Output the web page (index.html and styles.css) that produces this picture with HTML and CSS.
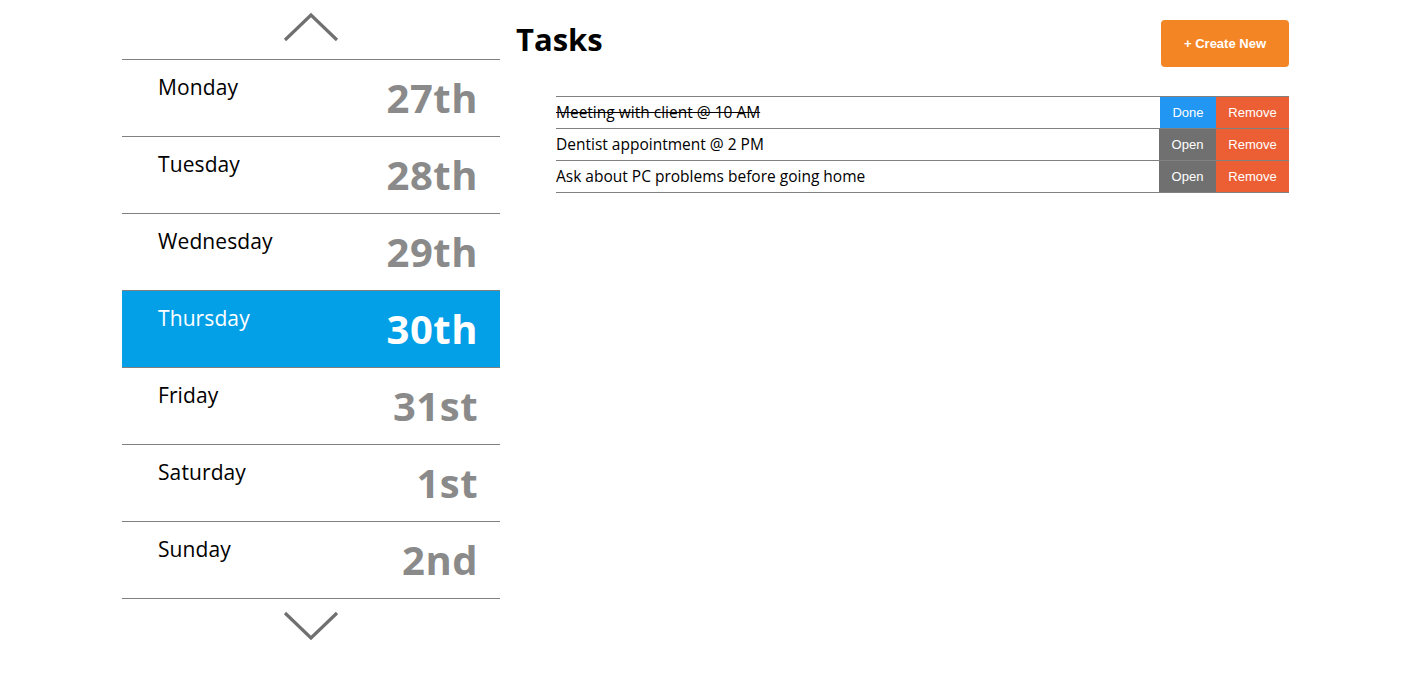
FILE: index.html
```html
<!DOCTYPE html>
<html>
<head>
<meta charset="utf-8">
<link rel="stylesheet" href="styles.css">
</head>
<body>
<div class="app">
  <aside class="calendar">
    <div class="arrow arrow-up">
      <svg width="56" height="30" viewBox="0 0 56 30"><polyline points="2,28 28,3 54,28" fill="none" stroke="#707070" stroke-width="3.2"/></svg>
    </div>
    <ul class="days">
      <li class="day"><span class="day-name">Monday</span><span class="day-date">27th</span></li>
      <li class="day"><span class="day-name">Tuesday</span><span class="day-date">28th</span></li>
      <li class="day"><span class="day-name">Wednesday</span><span class="day-date">29th</span></li>
      <li class="day active"><span class="day-name">Thursday</span><span class="day-date">30th</span></li>
      <li class="day"><span class="day-name">Friday</span><span class="day-date">31st</span></li>
      <li class="day"><span class="day-name">Saturday</span><span class="day-date">1st</span></li>
      <li class="day"><span class="day-name">Sunday</span><span class="day-date">2nd</span></li>
    </ul>
    <div class="arrow arrow-down">
      <svg width="56" height="30" viewBox="0 0 56 30"><polyline points="2,2 28,27 54,2" fill="none" stroke="#707070" stroke-width="3.2"/></svg>
    </div>
  </aside>
  <main class="tasks">
    <header class="tasks-header">
      <h1 class="title">Tasks</h1>
      <button class="btn-create">+ Create New</button>
    </header>
    <div class="task-list">
      <div class="task">
        <span class="task-text done">Meeting with client @ 10 AM</span>
        <button class="btn btn-done">Done</button>
        <button class="btn btn-remove">Remove</button>
      </div>
      <div class="task">
        <span class="task-text">Dentist appointment @ 2 PM</span>
        <button class="btn btn-open">Open</button>
        <button class="btn btn-remove">Remove</button>
      </div>
      <div class="task">
        <span class="task-text">Ask about PC problems before going home</span>
        <button class="btn btn-open">Open</button>
        <button class="btn btn-remove">Remove</button>
      </div>
    </div>
  </main>
</div>
</body>
</html>
```

FILE: styles.css
```css
* { box-sizing: border-box; }
body {
  margin: 0;
  font-family: "Open Sans", "Noto Sans", sans-serif;
  color: #000;
  background: #fff;
}
.app {
  display: flex;
  padding-left: 122px;
  gap: 16px;
}
.calendar {
  width: 378px;
  flex: none;
}
.arrow {
  display: flex;
  justify-content: center;
}
.arrow-up {
  height: 59px;
  padding-top: 12px;
}
.arrow-down {
  padding-top: 12px;
}
.days {
  list-style: none;
  margin: 0;
  padding: 0;
  border-top: 1px solid #808080;
}
.day {
  height: 77px;
  border-bottom: 1px solid #808080;
  display: flex;
  justify-content: space-between;
  padding: 12px 22px 0 36px;
}
.day-name {
  font-size: 21px;
  line-height: 30px;
  letter-spacing: 0.1px;
}
.day-date {
  font-size: 40px;
  font-weight: 700;
  color: #8a8a8a;
  line-height: 46px;
  margin-top: 3px;
  letter-spacing: 0.5px;
}
.day.active {
  background: #03a0e8;
}
.day.active .day-name,
.day.active .day-date {
  color: #fff;
}
.tasks {
  width: 773px;
  flex: none;
}
.tasks-header {
  display: flex;
  justify-content: space-between;
  align-items: flex-start;
  padding-top: 20px;
}
.title {
  margin: 0;
  font-size: 31px;
  font-weight: 700;
  line-height: 39px;
}
.btn-create {
  width: 128px;
  height: 47px;
  border: none;
  border-radius: 4px;
  background: #f48525;
  color: #fff;
  font-family: "Liberation Sans", Arial, sans-serif;
  font-weight: 700;
  font-size: 13px;
}
.task-list {
  margin: 29px 0 0 40px;
  border-top: 1px solid #808080;
}
.task {
  display: flex;
  height: 32px;
  border-bottom: 1px solid #808080;
}
.task-text {
  flex: 1;
  font-size: 15.5px;
  line-height: 31px;
}
.task-text.done {
  text-decoration: line-through;
}
.btn {
  border: none;
  color: #fff;
  font-family: "Liberation Sans", Arial, sans-serif;
  font-size: 13px;
  height: 31px;
  padding: 0;
}
.btn-done { width: 56px; background: #2196f3; }
.btn-open { width: 57px; background: #707070; }
.btn-remove { width: 73px; background: #ec5f35; }
```
